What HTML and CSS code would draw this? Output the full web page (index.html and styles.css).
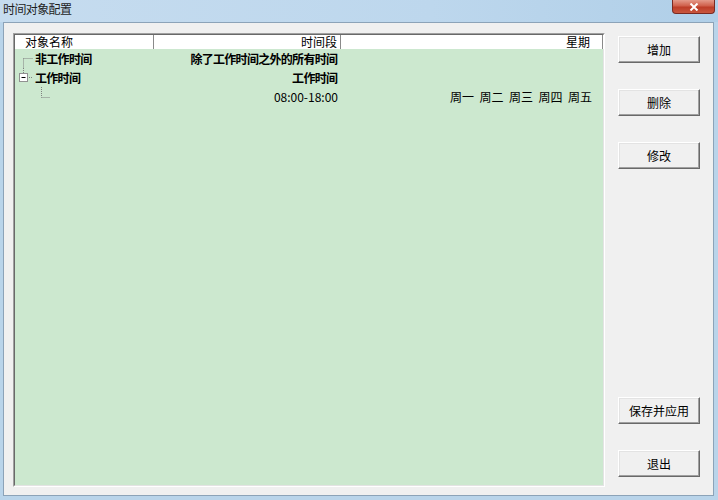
FILE: index.html
```html
<!DOCTYPE html>
<html>
<head>
<meta charset="utf-8">
<link rel="stylesheet" href="styles.css">
</head>
<body>
<div class="window">
  <div class="titlebar">
    <span class="title">时间对象配置</span>
    <span class="close">
      <svg width="10" height="8" viewBox="0 0 10 8"><path d="M1.5 0.5 L8.5 7.5 M8.5 0.5 L1.5 7.5" stroke="#fff" stroke-width="2"/></svg>
    </span>
  </div>
  <div class="client">
    <div class="list">
      <div class="list-inner">
        <div class="row header">
          <div class="c1 h">对象名称</div>
          <div class="c2 h">时间段</div>
          <div class="c3 h">星期</div>
        </div>
        <div class="row">
          <div class="c1 bold">
            <svg class="tree" width="20" height="19" viewBox="0 0 20 19">
              <path d="M8.5 9.5 V19 M8.5 9.5 H18" stroke="#808080" stroke-dasharray="1 1" fill="none"/>
            </svg>非工作时间
          </div>
          <div class="c2 bold">除了工作时间之外的所有时间</div>
          <div class="c3"></div>
        </div>
        <div class="row">
          <div class="c1 bold">
            <svg class="tree" width="20" height="19" viewBox="0 0 20 19">
              <path d="M8.5 0 V5 M12 9.5 H18" stroke="#808080" stroke-dasharray="1 1" fill="none"/>
              <rect x="4.5" y="5.5" width="8" height="8" fill="#fff" stroke="#919191"/>
              <path d="M6.5 9.5 H10.5" stroke="#000"/>
            </svg>工作时间
          </div>
          <div class="c2 bold">工作时间</div>
          <div class="c3"></div>
        </div>
        <div class="row">
          <div class="c1">
            <svg class="tree" width="40" height="19" viewBox="0 0 40 19">
              <path d="M26.5 0 V10.5 M26.5 10.5 H35" stroke="#808080" stroke-dasharray="1 1" fill="none"/>
            </svg>
          </div>
          <div class="c2">08:00-18:00</div>
          <div class="c3 days"><span>周一</span><span>周二</span><span>周三</span><span>周四</span><span>周五</span></div>
        </div>
      </div>
    </div>
    <div class="buttons">
      <div class="btn">增加</div>
      <div class="btn">删除</div>
      <div class="btn">修改</div>
      <div class="btn push">保存并应用</div>
      <div class="btn">退出</div>
    </div>
  </div>
</div>
</body>
</html>
```
FILE: styles.css
```css
html, body {
  margin: 0;
  padding: 0;
}
body {
  width: 718px;
  height: 500px;
  overflow: hidden;
  font-family: "Noto Sans CJK SC", "Noto Sans", sans-serif;
  font-size: 12px;
  color: #000;
}
.window {
  width: 718px;
  height: 500px;
  box-sizing: border-box;
  background: #b9d4ea;
  display: flex;
  flex-direction: column;
}
.titlebar {
  height: 22px;
  flex: none;
  display: flex;
  justify-content: space-between;
  align-items: flex-start;
  background: linear-gradient(to right, #c6dcef 0%, #bdd7ed 60%, #b0cfe8 100%);
}
.title {
  padding-left: 3px;
  line-height: 18px;
  letter-spacing: -0.6px;
  color: #1e1e1e;
}
.close {
  width: 43px;
  height: 14px;
  margin-right: 3px;
  box-sizing: border-box;
  border: 1px solid #7a2a22;
  border-top: none;
  border-radius: 0 0 4px 4px;
  background: linear-gradient(to bottom, #e49a8a 0%, #d0604b 45%, #bd3d28 55%, #c9573e 100%);
  display: flex;
  align-items: center;
  justify-content: center;
}
.close svg {
  display: block;
}
.client {
  flex: 1;
  margin: 0 4px 4px 3px;
  border: 1px solid #8ca3b8;
  background: #f0f0f0;
  display: flex;
  padding: 10px 0 0 9px;
  box-sizing: border-box;
  min-height: 0;
}
.list {
  width: 592px;
  height: 454px;
  box-sizing: border-box;
  border: 1px solid;
  border-color: #a0a0a0 #ffffff #ffffff #a0a0a0;
  flex: none;
}
.list-inner {
  height: 100%;
  box-sizing: border-box;
  border: 1px solid;
  border-color: #696969 #e3e3e3 #e3e3e3 #696969;
  background: #cce8cf;
}
.row {
  display: flex;
  height: 19px;
  line-height: 19px;
}
.row.header {
  height: 14px;
  line-height: 14px;
  background: #ffffff;
}
.c1 { width: 139px; flex: none; display: flex; align-items: center; }
.c2 { width: 187px; flex: none; text-align: right; padding-right: 3px; box-sizing: border-box; }
.c3 { width: 262px; flex: none; text-align: right; padding-right: 11px; box-sizing: border-box; }
.h { box-sizing: border-box; border-right: 1px solid #8a8a8a; box-shadow: 1px 0 0 #fff; }
.c1.h { padding-left: 10px; }
.c2.h { padding-right: 3px; }
.c3.h { padding-right: 12px; }
.bold { font-weight: 700; letter-spacing: -0.7px; }
.c2.bold { padding-right: 3.7px; }
.tree { display: block; flex: none; }
.days {
  display: flex;
  justify-content: flex-end;
  gap: 5.5px;
}
.buttons {
  flex: none;
  margin-left: 13px;
  width: 82px;
  height: 454px;
  box-sizing: border-box;
  padding: 3px 0 10px;
  display: flex;
  flex-direction: column;
  gap: 26px;
}
.btn {
  height: 27px;
  box-sizing: border-box;
  border: 1px solid;
  border-color: #ffffff #696969 #696969 #ffffff;
  box-shadow: inset -1px -1px 0 #a0a0a0, inset 1px 1px 0 #e3e3e3;
  background: #f0f0f0;
  display: flex;
  align-items: center;
  justify-content: center;
  flex: none;
}
.btn.push {
  margin-top: auto;
}
```
